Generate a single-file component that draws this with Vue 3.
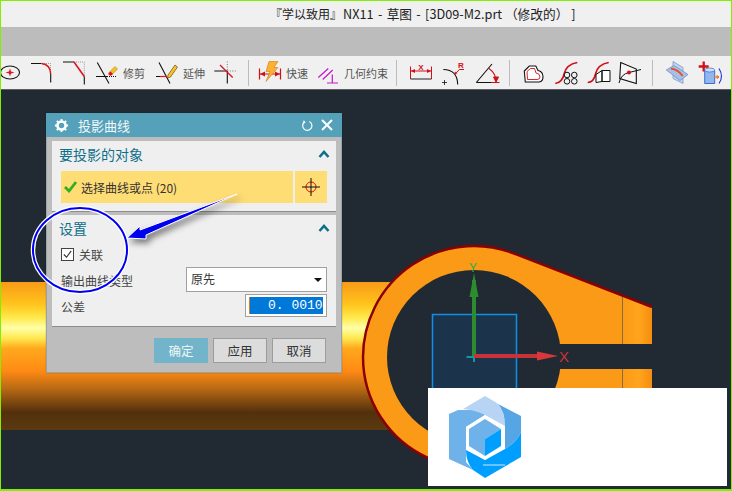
<script setup>
</script>

<template>
  <div class="window">
    <header class="title"><span class="head">『学以致用』</span><span class="lead">NX11 - 草图 - </span>[3D09-M2.prt （修改的） ]</header>
    <div class="band"></div>
    <nav class="toolbar">
      <svg class="ico first" viewBox="0 0 22 22"><ellipse cx="10" cy="11" rx="9.500" ry="6.500" fill="none" stroke="#111" stroke-width="1.100"/><path d="M10 7l1 3 3.500 1-3.500 1-1 3-1-3-3.500-1 3.500-1z" fill="#e0141c"/></svg>
      <svg class="ico gap1" viewBox="0 0 22 22"><path d="M12 2h8.500v10" stroke="#999" stroke-dasharray="1 1" fill="none"/><path d="M1 2h10.500M20.700 12.500V21" stroke="#111" stroke-width="1.100" fill="none"/><path d="M11.500 2q9 1 9.200 10.500" stroke="#e0141c" stroke-width="1.500" fill="none"/></svg>
      <svg class="ico" viewBox="0 0 22 22"><path d="M11 .5h10.300V15" stroke="#999" stroke-dasharray="1 1" fill="none"/><path d="M0 .5h11M21.300 15v8" stroke="#111" stroke-width="1.100" fill="none"/><path d="M11 .5L21.300 15" stroke="#e0141c" stroke-width="1.600" fill="none"/></svg>
      <svg class="ico" viewBox="0 0 22 22"><path d="M1.300 1L13 22M0 15h11" stroke="#111" stroke-width="1.100" fill="none"/><path d="M11 15h10" stroke="#111" stroke-dasharray="1 1"/><path d="M13 11l6-6 2.500 2.500-6 6z" fill="#f5c020" stroke="#b07010" stroke-width=".5"/><path d="M12 12.500l2.500-2.500 2.500 2.500-2.500 2z" fill="#d8141c"/></svg>
      <span class="label">修剪</span>
      <svg class="ico" viewBox="0 0 22 22"><path d="M3 1l11 21M0 15h5" stroke="#111" stroke-width="1.100" fill="none"/><path d="M4 15h7" stroke="#e0141c" stroke-width="1.200"/><path d="M12 13.500l7-10 2.500 2-7 10-3 1z" fill="#f7c428" stroke="#6a4a10" stroke-width=".7"/></svg>
      <span class="label">延伸</span>
      <svg class="ico gap2" viewBox="0 0 22 22"><path d="M13.300 0v10M13.300 9.500H22" stroke="#777" stroke-dasharray="1 1.500" fill="none"/><path d="M.3 9.500h13M13.300 9.500V22" stroke="#111" stroke-width="1.100" fill="none"/><path d="M6 3.500L18.700 16" stroke="#e0141c" stroke-width="1.300"/></svg>
      <i class="sep"></i>
      <svg class="ico gap3" viewBox="0 0 22 22"><path d="M.5 7v11M21.500 7v11M1 12.500h20" stroke="#d01018" stroke-width="1.200"/><path d="M1 12.500l5-2.500v5zM21 12.500l-5-2.500v5z" fill="#d01018"/><path d="M10 0h9l-4 6h4L7 20l4-10H7z" fill="#fbb02e" stroke="#d2781a" stroke-width=".6"/></svg>
      <span class="label">快速</span>
      <svg class="ico gap4" viewBox="0 0 22 22"><path d="M1.300 16L11.300 7M5.700 18L15.700 8.500" stroke="#c118c9" stroke-width="1.200"/><path d="M10 21.500h11M15.300 13v8" stroke="#c118c9" stroke-width="1.200"/></svg>
      <span class="label">几何约束</span>
      <i class="sep sep2"></i>
      <svg class="ico gap5" viewBox="0 0 22 22"><path d="M.5 5v12.500M21.500 5v12.500M1 9.500h20" stroke="#d01018" stroke-width="1"/><path d="M1 9.500l4-2v4zM21 9.500l-4-2v4z" fill="#d01018"/><path d="M.5 17.500h21" stroke="#222" stroke-width="1"/><text x="11" y="8" class="tiny">X</text></svg>
      <svg class="ico gap" viewBox="0 0 22 22"><path d="M.3 8q14 0 14.400 15" stroke="#111" stroke-width="1.100" fill="none"/><path d="M-1 21h5M1.500 18.500v5" stroke="#111" stroke-width=".8"/><path d="M12.300 12.500L16.300 8H21" stroke="#d01018" stroke-width="1" fill="none"/><path d="M11 13.500l1-3.500 2 2z" fill="#d01018"/><text x="18" y="6.500" class="tiny">R</text></svg>
      <svg class="ico gap" viewBox="0 0 22 22"><path d="M.3 21L16 2.500M.3 21H15" stroke="#111" stroke-width="1.100" fill="none"/><path d="M13 7q7 5 7 13" stroke="#d01018" stroke-width="1.100" fill="none"/><path d="M20 20.500l-2.500-5h5zM15 21h8.500" stroke="#d01018" fill="#d01018"/></svg>
      <i class="sep sep3"></i>
      <svg class="ico gap6" viewBox="0 0 22 22"><path d="M1.300 9.500L6.300 4.500h6.500L15 9q5 1 5 6.500 0 4.500-4 5H2.300z" fill="#fff" stroke="#111" stroke-width="1.100"/><path d="M4 10l3.500-3h4l1.500 4.500q4 .5 4 4 0 2.500-3 2.500H4.500z" fill="none" stroke="#d01018" stroke-width=".9"/></svg>
      <svg class="ico gap7" viewBox="0 0 22 22"><path d="M.3 22q7-1 9-10t13-11" stroke="#d01018" stroke-width="1.700" fill="none"/><g fill="#f0f0f0" stroke="#111" stroke-width="1"><circle cx="12" cy="13.500" r="2.800"/><circle cx="19.300" cy="13.500" r="2.800"/><circle cx="12" cy="19.800" r="2.800"/><circle cx="19.300" cy="19.800" r="2.800"/></g></svg>
      <svg class="ico gap7" viewBox="0 0 22 22"><path d="M.7 21q6 0 8-9t13-11" stroke="#d01018" stroke-width="1.700" fill="none"/><path d="M9 13l6-4v11l-6 1zM15 9h8v11h-8z" fill="#fff" stroke="#111"/></svg>
      <svg class="ico gap7" viewBox="0 0 22 22"><path d="M1.700 1l15.600 6.500V22L.7 17z" fill="#f5f5f5" stroke="#111" stroke-width="1.100"/><path d="M0 21.500q2-9 10-10.500l12-3" stroke="#111" fill="none"/><circle cx="10" cy="11" r="2" fill="#d01018"/></svg>
      <i class="sep sep4"></i>
      <svg class="ico gap5" viewBox="0 0 22 22"><path d="M7 0l10 6v16l-10-5z" fill="#c4d4ee" stroke="#7a98cc" stroke-width=".8"/><path d="M.3 8.500L8 4l14 9-8 6z" fill="#a9c0e6" stroke="#6f8fc8" stroke-width=".8"/><path d="M5 7q7 1 11.700 7.500" stroke="#e0502a" stroke-width="1.800" fill="none"/></svg>
      <svg class="ico gap" viewBox="0 0 22 22"><path d="M4.700 0v10M-.3 5h10" stroke="#d01018" stroke-width="2.300"/><path d="M5.700 9h10v13h-10z" fill="#8fb8f0" stroke="#2050c0" stroke-width=".8"/><ellipse cx="10.700" cy="8.500" rx="5" ry="2" fill="#cfe0fa" stroke="#2050c0" stroke-width=".6"/><path d="M15 15.500h5l-2-1.500v3l2-1.500" stroke="#f07010" fill="none"/><path d="M20 7q5 8 0 15" stroke="#1030e0" stroke-width="1.100" fill="none"/></svg>
    </nav>

    <main class="canvas">
      <svg class="scene" viewBox="1 0 730 399" preserveAspectRatio="none">
        <defs>
          <linearGradient id="rod" x1="0" y1="0" x2="0" y2="1">
            <stop offset="0" stop-color="#f89a18"/>
            <stop offset=".15" stop-color="#ffc41c"/>
            <stop offset=".24" stop-color="#ffe94a"/>
            <stop offset=".31" stop-color="#ffffa8"/>
            <stop offset=".38" stop-color="#ffe850"/>
            <stop offset=".45" stop-color="#ffa81c"/>
            <stop offset=".6" stop-color="#ff8a14"/>
            <stop offset=".72" stop-color="#b86a14"/>
            <stop offset=".88" stop-color="#53300c"/>
            <stop offset="1" stop-color="#5a3a10"/>
          </linearGradient>
          <linearGradient id="end" x1="0" x2="1">
            <stop offset="0" stop-color="#fb9a16"/>
            <stop offset=".55" stop-color="#ffa51c"/>
            <stop offset="1" stop-color="#f58d10"/>
          </linearGradient>
        </defs>
        <rect x="0" y="192" width="400" height="148" fill="url(#rod)"/>
        <circle cx="474" cy="267" r="111" fill="#fb9a16"/>
        <path d="M474 156 L517 164.700 L652 217 V368 H474Z" fill="#fb9a16"/>
        <circle cx="474" cy="267" r="87" fill="#212932"/>
        <rect x="540" y="254" width="113" height="25" fill="#212932"/>
        <path d="M623 206 L652 217 V254 H623Z" fill="url(#end)"/>
        <path d="M623 279 H652 V368 H623Z" fill="url(#end)"/>
        <path d="M622.500 206V254M622.500 279V368" stroke="#8b6b42" stroke-width="1"/>
        <path d="M428 368 A111 111 0 0 1 363 267 A111 111 0 0 1 517 164.700 L652 217" fill="none" stroke="#8b0000" stroke-width="2.500"/>
        <rect x="432.500" y="224.500" width="84" height="90" fill="#1c344b" stroke="#0f8fe8" stroke-width="1.500"/>
        <path d="M474 266V190" stroke="#2c8c2e" stroke-width="4"/>
        <path d="M474 183l-4.500 24h9z" fill="#2c8c2e"/>
        <path d="M466.500 267h8M474 267v5" stroke="#0e9a9a" stroke-width="2"/>
        <path d="M474 266h66" stroke="#c8333a" stroke-width="4"/>
        <path d="M558 266l-21-4.500v9z" fill="#d8373c"/>
        <text x="469" y="182" class="axis y">Y</text>
        <text x="559" y="272" class="axis x">X</text>
      </svg>

      <section class="dialog">
        <div class="dhead">
          <svg class="gear" viewBox="0 0 16 16"><circle cx="8" cy="8" r="4.300" fill="none" stroke="#fff" stroke-width="2.800"/><path d="M8 1v3M8 12v3M1 8h3M12 8h3M3 3l2 2M11 11l2 2M13 3l-2 2M3 13l2-2" stroke="#fff" stroke-width="2"/></svg>
          <span class="dtitle">投影曲线</span>
          <svg class="reset" viewBox="0 0 14 14"><path d="M4 3a5 5 0 1 0 5-.3" fill="none" stroke="#fff" stroke-width="1.300"/><path d="M3 1l2 3-3 1z" fill="#fff"/></svg>
          <svg class="close" viewBox="0 0 12 12"><path d="M1 1l10 10M11 1L1 11" stroke="#fff" stroke-width="2"/></svg>
        </div>
        <div class="group one">
          <div class="ghead"><span>要投影的对象</span><svg class="chev" viewBox="0 0 12 8"><path d="M1.500 7L6 2l4.500 5" fill="none" stroke="#0d6f8a" stroke-width="2.600"/></svg></div>
          <div class="pick">
            <div class="pickmain">
              <svg class="check" viewBox="0 0 13 12"><path d="M1 6l4 4 7-9" fill="none" stroke="#30b020" stroke-width="2.800"/></svg>
              <span>选择曲线或点 (20)</span>
            </div>
            <div class="pickbtn"><svg viewBox="0 0 20 20"><circle cx="10" cy="10" r="5" fill="none" stroke="#e01010"/><path d="M10 1v18M1 10h18" stroke="#111"/></svg></div>
          </div>
        </div>
        <div class="group two">
          <div class="ghead"><span>设置</span><svg class="chev" viewBox="0 0 12 8"><path d="M1.500 7L6 2l4.500 5" fill="none" stroke="#0d6f8a" stroke-width="2.600"/></svg></div>
          <label class="assoc"><span class="box"><svg viewBox="0 0 12 12"><path d="M2 6l3 3 5-7" fill="none" stroke="#333" stroke-width="1.200"/></svg></span>关联</label>
          <div class="row"><span>输出曲线类型</span><div class="select">原先<i class="caret"></i></div></div>
          <div class="row tol"><span>公差</span><div class="input"><div class="sel">0. 00100</div></div></div>
        </div>
        <div class="actions">
          <button class="primary">确定</button>
          <button>应用</button>
          <button>取消</button>
        </div>
      </section>

      <svg class="marks" viewBox="0 0 732 491">
        <ellipse cx="80" cy="250" rx="47" ry="42" fill="none" stroke="#fff" stroke-width="4.500"/>
        <ellipse cx="80" cy="250" rx="47" ry="42" fill="none" stroke="#0000f0" stroke-width="2"/>
        <path class="arrow" d="M127 238 L140 226 L140 230 L237 194 L146 235 L146 239Z" fill="#0000f0" stroke="#fff" stroke-width="1"/>
      </svg>

      <div class="brand">
        <svg class="logo" viewBox="0 0 72 82">
          <path d="M0 18L9 14H28Q40 14 50 22L36 19 17 31V52L17 66 24 74 0 63Z" fill="#6fb1e9"/>
          <path d="M14 13L36 0 48 7Q56 16 56 30L36 19Q26 14 14 13Z" fill="#b8d4f4"/>
          <path d="M49 8L72 20V36Q68 46 56 53V30Q56 16 49 8Z" fill="#56a6e6"/>
          <path d="M17 54L36 64 56 53Q68 46 72 36V61L36 82 24 74Q17 66 17 54Z" fill="#009fff"/>
          <path d="M36 19L55 31V52L36 64 17 52V31Z" fill="#fff"/>
          <path d="M20 33L36 23 52 33 36 43V60L20 50Z" fill="#6fb1e9"/>
          <path d="M36 43L52 33V50L36 60Z" fill="#009fff"/>
          <path d="M34 69H56" stroke="#fff" stroke-width=".8"/>
        </svg>
      </div>
    </main>
  </div>
</template>

<style>
html, body { margin: 0; background: #212932; }
</style>

<style scoped>
.window {
  width: 732px;
  height: 491px;
  box-sizing: border-box;
  border: 1px solid #80f000;
  border-bottom-width: 2px;
  display: flex;
  flex-direction: column;
  font-family: "Noto Sans CJK SC", "Liberation Sans", sans-serif;
  overflow: hidden;
  position: relative;
}
.title {
  height: 26px;
  flex: none;
  background: #f0f0f0;
  color: #222;
  font-size: 12.700px;
  line-height: 25px;
  padding-left: 269px;
  white-space: pre;
}
.head { font-size: 12px; margin-right: 1px; }
.lead { word-spacing: 1.500px; }
.band { height: 29px; flex: none; background: #bcbcbc; }
.toolbar {
  height: 33px;
  flex: none;
  background: #f0f0f0;
  display: flex;
  align-items: center;
  border-bottom: 1px solid #5a5e64;
  color: #555;
  overflow: hidden;
}
.ico { width: 22px; height: 27px; flex: none; margin-left: 11px; overflow: visible; }
.ico.first { margin-left: -1px; }
.ico.gap1 { margin-left: 8px; }
.ico.gap { margin-left: 11px; }
.ico.gap2 { margin-left: 9px; }
.ico.gap3 { margin-left: 0; }
.ico.gap4 { margin-left: 9px; }
.ico.gap5 { margin-left: 13px; }
.ico.gap6 { margin-left: 13px; }
.ico.gap7 { margin-left: 10px; }
.label { font-size: 11px; margin-left: 5px; white-space: nowrap; flex: none; color: #555; }
.sep { width: 1px; height: 26px; background: #bcbcbc; margin: 0 10px 0 12px; flex: none; }
.sep2 { margin: 0 0 0 8px; }
.sep3 { margin: 0 0 0 11px; }
.sep4 { margin: 0 0 0 11px; }
.tiny { font: bold 8px "Liberation Sans", sans-serif; fill: #d01018; text-anchor: middle; }
.canvas { flex: 1; position: relative; background: #212932; }
.scene { position: absolute; inset: 0; width: 100%; height: 100%; }
.axis { font: 15px "Liberation Sans", sans-serif; }
.axis.y { fill: #2faa50; font-size: 12px; }
.axis.x { fill: #c8333a; }

.dialog {
  position: absolute;
  left: 45px;
  top: 23px;
  width: 296px;
  height: 260px;
  box-sizing: border-box;
  background: #bdbdbd;
  border: 1px solid #9aa4a8;
  border-top: 0;
  display: flex;
  flex-direction: column;
  box-shadow: 0 0 1px #0006;
}
.dhead {
  height: 24px;
  flex: none;
  margin: 0 -1px;
  background: #55a1ba;
  color: #fff;
  display: flex;
  align-items: center;
  padding: 0 9px 0 8px;
}
.gear { width: 15px; height: 15px; }
.dtitle { font-size: 13px; margin-left: 9px; color: #f2f8fa; flex: 1; }
.reset { width: 13px; height: 13px; margin-right: 7px; }
.close { width: 12px; height: 12px; }
.group { background: #efefef; margin: 4px 5px 0; box-shadow: 0 1px 0 #8c8c8c; }
.group.one { height: 70px; }
.group.two { height: 111px; }
.ghead {
  height: 25px;
  display: flex;
  align-items: center;
  justify-content: space-between;
  padding: 0 6px 0 7px;
  color: #0d6f8a;
  font-size: 14px;
}
.chev { width: 12px; height: 8px; }
.pick { display: flex; margin: 5px 9px 0; height: 32px; gap: 2px; }
.pickmain {
  width: 232px;
  background: #ffdd75;
  display: flex;
  align-items: center;
  font-size: 12px;
  color: #333;
  padding-left: 3px;
  box-sizing: border-box;
}
.check { width: 13px; height: 12px; margin-right: 4px; }
.pickbtn { flex: 1; background: #ffdd75; display: flex; align-items: center; justify-content: center; }
.pickbtn svg { width: 20px; height: 20px; }
.assoc { display: flex; align-items: center; font-size: 12px; color: #444; margin: 4px 0 0 9px; height: 20px; }
.box { width: 11px; height: 11px; border: 1px solid #444; background: #fff; margin-right: 5px; display: block; }
.box svg { display: block; }
.row { display: flex; align-items: center; justify-content: space-between; font-size: 12px; color: #444; margin: 3px 9px 0 9px; height: 25px; }
.row > span { position: relative; top: 1px; }
.row.tol { margin-top: 2px; height: 23px; }
.select {
  width: 141px;
  height: 25px;
  box-sizing: border-box;
  background: #fff;
  border: 1px solid #a0a0a0;
  padding-left: 4px;
  line-height: 22px;
  position: relative;
  color: #333;
}
.caret {
  position: absolute;
  right: 4px;
  top: 10px;
  border: 4px solid transparent;
  border-top: 4px solid #111;
  border-bottom: 0;
}
.input {
  width: 82px;
  height: 23px;
  box-sizing: border-box;
  background: #fff;
  border: 1px solid #a0a0a0;
  padding: 2px 3px;
}
.sel {
  height: 17px;
  background: #0078d7;
  border-left: 1px solid #e07a20;
  color: #fff;
  font: 13px/17px "Liberation Mono", monospace;
  padding-left: 18px;
  white-space: pre;
  overflow: hidden;
}
.actions { display: flex; justify-content: flex-end; gap: 5px; margin: 12px 15px 0 0; }
button {
  width: 54px;
  height: 25px;
  padding: 0;
  box-sizing: border-box;
  background: #dcdcdc;
  border: 1px solid #9c9c9c;
  font: 12.500px "Noto Sans CJK SC", sans-serif;
  color: #333;
}
button.primary { background: #72b5ca; border-color: #72b5ca; color: #eef6f8; }
.marks { position: absolute; left: -1px; top: -90px; width: 732px; height: 491px; pointer-events: none; overflow: visible; }
.arrow { filter: drop-shadow(3px 4px 3px rgba(0,0,0,.5)); }
.brand {
  position: absolute;
  left: 427px;
  top: 298px;
  width: 299px;
  height: 98px;
  background: #fff;
  box-sizing: border-box;
  padding: 8px 0 0 21px;
}
.logo { width: 72px; height: 82px; display: block; }
</style>
